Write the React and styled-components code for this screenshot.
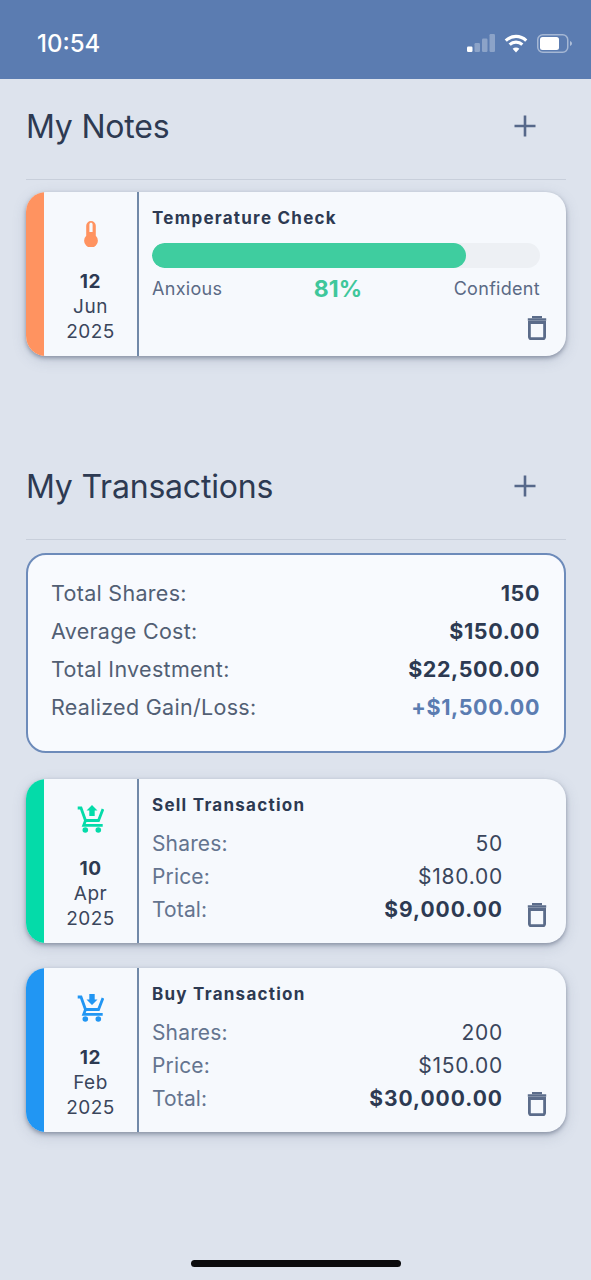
import React from 'react'
import styled, { createGlobalStyle } from 'styled-components'

const GlobalStyle = createGlobalStyle`
  html, body {
    margin: 0;
    padding: 0;
    background: #dde3ed;
    font-family: Inter, "Liberation Sans", sans-serif;
  }
`

const Page = styled.div`
  width: 591px;
  height: 1280px;
  position: relative;
  overflow: hidden;
  background: #dde3ed;
  display: flex;
  flex-direction: column;
`

const StatusBar = styled.div`
  height: 79px;
  flex: none;
  background: #5b7cb1;
  display: flex;
  align-items: center;
  justify-content: space-between;
  padding: 7px 19px 0 37px;
  box-sizing: border-box;
`

const Clock = styled.span`
  color: #fff;
  font-size: 24px;
  font-weight: 500;
`

const StatusIcons = styled.div`
  display: flex;
  align-items: center;
  gap: 9px;
`

const Content = styled.main`
  padding: 0 25px 0 26px;
  display: flex;
  flex-direction: column;
`

const SectionHeader = styled.div`
  height: 101px;
  box-sizing: border-box;
  padding: 0 29px 6px 0;
  display: flex;
  align-items: center;
  justify-content: space-between;
  border-bottom: 1px solid #c8cfdb;
  margin-top: ${p => p.$top || 0}px;
`

const SectionTitle = styled.h2`
  margin: 0;
  color: #2d3a52;
  font-size: 32px;
  font-weight: 400;
  letter-spacing: -0.2px;
`

const Card = styled.div`
  height: 164px;
  margin-top: ${p => p.$top}px;
  display: flex;
  border-radius: 20px;
  overflow: hidden;
  background: #f6f9fd;
  box-shadow: 0 2px 4px rgba(60, 70, 95, 0.45), 0 4px 14px rgba(90, 105, 135, 0.22);
`

const Stripe = styled.div`
  width: 18px;
  flex: none;
  background: ${p => p.$color};
`

const DateColumn = styled.div`
  width: 95px;
  flex: none;
  box-sizing: border-box;
  border-right: 2px solid #7189a8;
  display: flex;
  flex-direction: column;
  align-items: center;
  padding-top: 24px;
`

const IconSlot = styled.div`
  height: 32px;
  display: flex;
  align-items: center;
  justify-content: center;
  margin-bottom: 21px;
`

const Day = styled.div`
  color: #2d3a52;
  font-size: 19px;
  font-weight: 700;
  line-height: 25px;
  letter-spacing: 0.6px;
`

const DateLine = styled.div`
  color: #3a465c;
  font-size: 19px;
  line-height: 25px;
  letter-spacing: 0.5px;
`

const CardBody = styled.div`
  flex: 1;
  position: relative;
  padding: 14px 26px 0 13px;
`

const CardTitle = styled.div`
  color: #2d3a52;
  font-size: 17px;
  font-weight: 700;
  line-height: 24px;
  letter-spacing: 1.25px;
`

const Track = styled.div`
  height: 25px;
  margin-top: 13px;
  border-radius: 13px;
  background: #edf0f4;
  overflow: hidden;
`

const Fill = styled.div`
  height: 100%;
  border-radius: 13px;
  background: #3fcd9f;
`

const ScaleRow = styled.div`
  display: flex;
  justify-content: space-between;
  align-items: center;
  margin-top: 8px;
  color: #5b6a85;
  font-size: 18px;
  line-height: 26px;
  letter-spacing: 0.3px;
`

const Percent = styled.span`
  color: #3fc79b;
  font-size: 23px;
  font-weight: 700;
  letter-spacing: 0;
`

const DetailRows = styled.div`
  margin-top: 10px;
  margin-right: 37px;
`

const DetailRow = styled.div`
  display: flex;
  justify-content: space-between;
  height: 33px;
  align-items: center;
  color: ${p => (p.$strong ? '#2d3a52' : '#3a465c')};
  font-size: 21px;
  font-weight: ${p => (p.$strong ? 700 : 400)};
  letter-spacing: ${p => (p.$strong ? 1 : 0.75)}px;
`

const DetailLabel = styled.span`
  color: #64748f;
  font-weight: 400;
  letter-spacing: 0.15px;
`

const TrashButton = styled.div`
  position: absolute;
  right: 19px;
  bottom: 16px;
  width: 20px;
  height: 24px;
  display: flex;
`

const Summary = styled.div`
  height: 200px;
  box-sizing: border-box;
  margin-top: 13px;
  border: 2px solid #6d8bba;
  border-radius: 20px;
  background: #f8fafe;
  padding: 19px 24px 0 23px;
`

const SummaryRow = styled.div`
  height: 38px;
  display: flex;
  align-items: center;
  justify-content: space-between;
`

const SummaryLabel = styled.span`
  color: #525f74;
  font-size: 21.5px;
  letter-spacing: 0.3px;
`

const SummaryValue = styled.span`
  color: ${p => p.$color || '#2d3a52'};
  font-size: 21.5px;
  font-weight: 700;
  letter-spacing: 0.6px;
`

const HomeIndicator = styled.div`
  position: absolute;
  left: 191px;
  bottom: 13px;
  width: 210px;
  height: 7px;
  border-radius: 4px;
  background: #0b0b0d;
`

const Signal = () => (
  <svg width="28" height="18" viewBox="0 0 28 18">
    <rect x="0" y="12.5" width="5.5" height="5.5" rx="1.2" fill="#fff" />
    <rect x="7.5" y="9" width="5.5" height="9" rx="1.2" fill="#fff" opacity=".3" />
    <rect x="15" y="4.5" width="5.5" height="13.5" rx="1.2" fill="#fff" opacity=".3" />
    <rect x="22.5" y="0" width="5.5" height="18" rx="1.2" fill="#fff" opacity=".3" />
  </svg>
)

const Wifi = () => (
  <svg width="24" height="19" viewBox="0 0 22 18" fill="none" stroke="#fff" strokeWidth="3">
    <path d="M1.3 6.2C6.8 1 15.2 1 20.7 6.2" />
    <path d="M5 10c3.4-3.1 8.6-3.1 12 0" />
    <path d="M11 17.6 7.8 14c1.9-1.500 4.500-1.500 6.400 0z" fill="#fff" stroke="none" />
  </svg>
)

const Battery = () => (
  <svg width="35" height="19" viewBox="0 0 35 19">
    <rect x=".75" y=".75" width="30" height="17.5" rx="5" fill="none" stroke="#fff" strokeOpacity=".45" strokeWidth="1.5" />
    <rect x="3" y="3" width="19" height="13" rx="2.5" fill="#fff" />
    <path d="M33 7c1.200.4 2 1.400 2 2.500s-.8 2.100-2 2.500z" fill="#fff" fillOpacity=".5" />
  </svg>
)

const Plus = () => (
  <svg width="24" height="24" viewBox="0 0 24 24" fill="none" stroke="#56688a" strokeWidth="2.600">
    <path d="M12 1.500v21M1.500 12h21" />
  </svg>
)

const Thermometer = () => (
  <svg width="14" height="30" viewBox="0 -4 14 30">
    <path
      fill="#ff9360"
      fillRule="evenodd"
      d="M7 0a4.800 4.800 0 0 1 4.800 4.800v10a6.900 6.900 0 1 1-9.600 0v-10A4.800 4.800 0 0 1 7 0zM7 1.800c-.9 0-1.600.7-1.600 1.600V11h3.200V3.400c0-.9-.7-1.600-1.600-1.600z"
    />
  </svg>
)

const Cart = ({ color, up }) => (
  <svg width="27" height="28" viewBox="0 0 27 28" fill="none">
    <path d="M.7 3H4l4.500 12.500h13L26 4" stroke={color} strokeWidth="2.800" />
    <path d="M8.500 15.500 6.700 20.300H25.700" stroke={color} strokeWidth="2.800" />
    <circle cx="8.300" cy="25" r="2.800" fill={color} />
    <circle cx="21.300" cy="25" r="2.800" fill={color} />
    <path
      fill={color}
      d={up ? 'M15 0l5.500 5.500h-2.800V11h-5.400V5.500H9.500z' : 'M12.300 0h5.400v5.500h2.800L15 11 9.500 5.500h2.800z'}
    />
  </svg>
)

const Trash = () => (
  <svg width="20" height="24" viewBox="0 0 20 24" fill="none" stroke="#5b6c8a">
    <path d="M2.400 6.500h15.200v14.600a1.500 1.500 0 0 1-1.500 1.500H3.900a1.500 1.500 0 0 1-1.500-1.500z" strokeWidth="2.800" />
    <path d="M.8 3.500h18.400" strokeWidth="2.400" />
    <path d="M5 1.200h10" strokeWidth="2.200" />
  </svg>
)

function DateBlock({ icon, day, month, year }) {
  return (
    <DateColumn>
      <IconSlot>{icon}</IconSlot>
      <Day>{day}</Day>
      <DateLine>{month}</DateLine>
      <DateLine>{year}</DateLine>
    </DateColumn>
  )
}

function TransactionCard({ top, color, up, day, month, title, shares, price, total }) {
  return (
    <Card $top={top}>
      <Stripe $color={color} />
      <DateBlock icon={<Cart color={color} up={up} />} day={day} month={month} year="2025" />
      <CardBody>
        <CardTitle>{title}</CardTitle>
        <DetailRows>
          <DetailRow>
            <DetailLabel>Shares:</DetailLabel>
            {shares}
          </DetailRow>
          <DetailRow>
            <DetailLabel>Price:</DetailLabel>
            {price}
          </DetailRow>
          <DetailRow $strong>
            <DetailLabel>Total:</DetailLabel>
            {total}
          </DetailRow>
        </DetailRows>
        <TrashButton>
          <Trash />
        </TrashButton>
      </CardBody>
    </Card>
  )
}

export default function App() {
  return (
    <Page>
      <GlobalStyle />
      <StatusBar>
        <Clock>10:54</Clock>
        <StatusIcons>
          <Signal />
          <Wifi />
          <Battery />
        </StatusIcons>
      </StatusBar>
      <Content>
        <SectionHeader>
          <SectionTitle>My Notes</SectionTitle>
          <Plus />
        </SectionHeader>
        <Card $top={12}>
          <Stripe $color="#ff9360" />
          <DateBlock icon={<Thermometer />} day="12" month="Jun" year="2025" />
          <CardBody>
            <CardTitle>Temperature Check</CardTitle>
            <Track>
              <Fill style={{ width: '81%' }} />
            </Track>
            <ScaleRow>
              <span>Anxious</span>
              <Percent>81%</Percent>
              <span>Confident</span>
            </ScaleRow>
            <TrashButton>
              <Trash />
            </TrashButton>
          </CardBody>
        </Card>

        <SectionHeader $top={83}>
          <SectionTitle>My Transactions</SectionTitle>
          <Plus />
        </SectionHeader>
        <Summary>
          <SummaryRow>
            <SummaryLabel>Total Shares:</SummaryLabel>
            <SummaryValue>150</SummaryValue>
          </SummaryRow>
          <SummaryRow>
            <SummaryLabel>Average Cost:</SummaryLabel>
            <SummaryValue>$150.00</SummaryValue>
          </SummaryRow>
          <SummaryRow>
            <SummaryLabel>Total Investment:</SummaryLabel>
            <SummaryValue>$22,500.00</SummaryValue>
          </SummaryRow>
          <SummaryRow>
            <SummaryLabel>Realized Gain/Loss:</SummaryLabel>
            <SummaryValue $color="#5b7cb1">+$1,500.00</SummaryValue>
          </SummaryRow>
        </Summary>
        <TransactionCard
          top={26}
          color="#04dba9"
          up
          day="10"
          month="Apr"
          title="Sell Transaction"
          shares="50"
          price="$180.00"
          total="$9,000.00"
        />
        <TransactionCard
          top={25}
          color="#2196f3"
          day="12"
          month="Feb"
          title="Buy Transaction"
          shares="200"
          price="$150.00"
          total="$30,000.00"
        />
      </Content>
      <HomeIndicator />
    </Page>
  )
}
